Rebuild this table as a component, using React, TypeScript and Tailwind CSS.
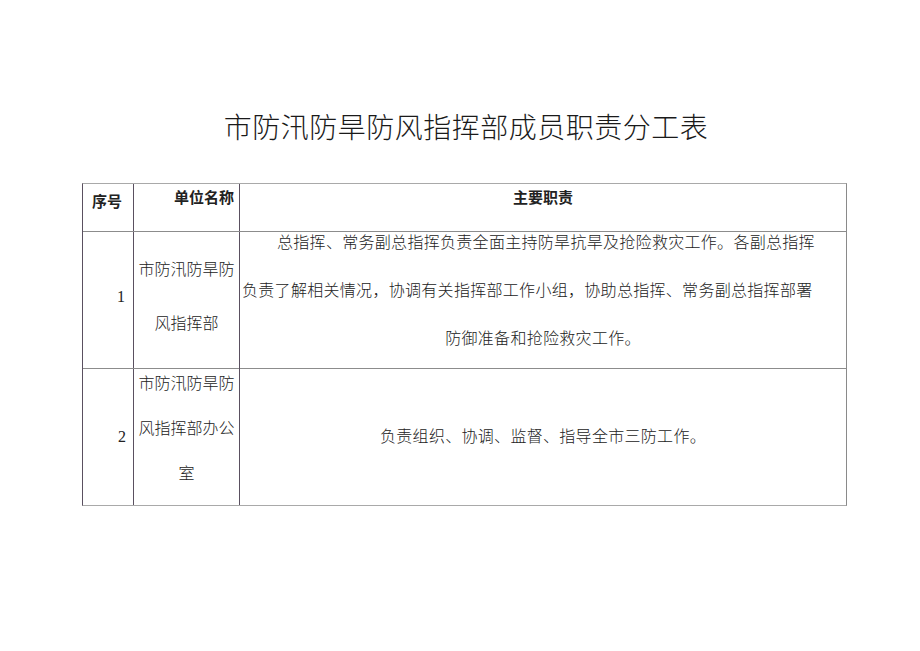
const CJK = "font-['Liberation_Serif','Noto_Sans_CJK_SC',serif]";

export default function App() {
  return (
    <div className={`w-[920px] h-[651px] bg-white text-[#222] ${CJK}`}>
      <div className="pt-[110px] text-center">
        <h1 className="text-[28px] leading-[38px] tracking-[0.5px] font-light text-[#1a1a1a] pl-[12px]">
          市防汛防旱防风指挥部成员职责分工表
        </h1>
      </div>
      <div className="ml-[82px] mt-[35px] w-[765px] border-t border-b border-[#a9a9a9] border-l border-r border-l-[#5a5060] border-r-[#8a8a8a]">
        {/* header */}
        <div className="grid grid-cols-[51px_106px_1fr] h-[48px] border-b border-[#8c8c8c]">
          <div className="border-r border-[#5a5060] pl-[9px] pt-[7px] text-[15px] font-bold">序号</div>
          <div className="border-r border-[#5a5060] pr-[5px] pt-[3px] text-right text-[15px] font-bold">单位名称</div>
          <div className="text-center pt-[3px] text-[15px] font-bold">主要职责</div>
        </div>
        {/* row 1 */}
        <div className="grid grid-cols-[51px_106px_1fr] h-[137px] border-b border-[#8c8c8c]">
          <div className="border-r border-[#5a5060] flex items-center justify-end pr-[8px] pb-[6px] text-[16px]">1</div>
          <div className="border-r border-[#5a5060] flex flex-col justify-center items-center text-[16px] font-light leading-[54px] pb-[6px]">
            <div>市防汛防旱防</div>
            <div>风指挥部</div>
          </div>
          <div className="text-[16px] font-light leading-[48px] -mt-[13px] tracking-[0.3px]">
            <div className="pl-[37px]">总指挥、常务副总指挥负责全面主持防旱抗旱及抢险救灾工作。各副总指挥</div>
            <div className="pl-[2px]">负责了解相关情况，协调有关指挥部工作小组，协助总指挥、常务副总指挥部署</div>
            <div className="text-center">防御准备和抢险救灾工作。</div>
          </div>
        </div>
        {/* row 2 */}
        <div className="grid grid-cols-[51px_106px_1fr] h-[136px]">
          <div className="border-r border-[#5a5060] flex items-center justify-end pr-[7px] text-[16px]">2</div>
          <div className="border-r border-[#5a5060] flex flex-col items-center text-[16px] font-light leading-[45px] -mt-[8px]">
            <div>市防汛防旱防</div>
            <div>风指挥部办公</div>
            <div>室</div>
          </div>
          <div className="flex items-center justify-center text-[16px] font-light tracking-[0.3px]">
            负责组织、协调、监督、指导全市三防工作。
          </div>
        </div>
      </div>
    </div>
  );
}
